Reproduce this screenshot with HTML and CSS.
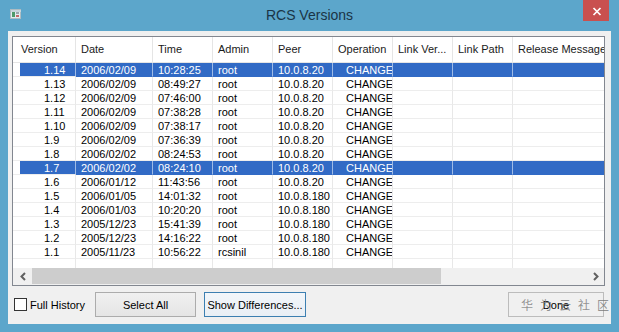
FILE: index.html
```html
<!DOCTYPE html>
<html>
<head>
<meta charset="utf-8">
<title>RCS Versions</title>
<link rel="stylesheet" href="styles.css">
</head>
<body>
<div class="window">
  <div class="titlebar">
    <svg class="app-icon" width="11" height="10" viewBox="0 0 11 10">
      <rect x="0.5" y="0.5" width="10" height="9" fill="#e4ecef" stroke="#aebcc2"/>
      <rect x="1" y="1" width="10" height="2" fill="#c9d6dc"/>
      <rect x="2" y="3" width="3" height="5" fill="#4f9a6a"/>
      <rect x="6" y="3" width="3" height="2" fill="#9aa7ad"/>
      <rect x="6" y="6" width="3" height="2" fill="#c46a6a"/>
    </svg>
    <div class="title">RCS Versions</div>
    <div class="close">
      <svg width="10" height="9" viewBox="0 0 10 9">
        <path d="M1.5 1 L8.5 8 M8.5 1 L1.5 8" stroke="#ffffff" stroke-width="1.7" fill="none"/>
      </svg>
    </div>
  </div>
  <div class="client">
    <div class="list">
      <div class="grid head">
        <span class="h-first">Version</span><span>Date</span><span>Time</span><span>Admin</span><span>Peer</span><span>Operation</span><span>Link Ver...</span><span>Link Path</span><span>Release Message</span>
      </div>
      <div class="rows">
        <div class="grid row sel"><span class="ver">1.14</span><span>2006/02/09</span><span>10:28:25</span><span>root</span><span>10.0.8.20</span><span class="op">CHANGE</span><span></span><span></span><span></span></div>
        <div class="grid row"><span class="ver">1.13</span><span>2006/02/09</span><span>08:49:27</span><span>root</span><span>10.0.8.20</span><span class="op">CHANGE</span><span></span><span></span><span></span></div>
        <div class="grid row"><span class="ver">1.12</span><span>2006/02/09</span><span>07:46:00</span><span>root</span><span>10.0.8.20</span><span class="op">CHANGE</span><span></span><span></span><span></span></div>
        <div class="grid row"><span class="ver">1.11</span><span>2006/02/09</span><span>07:38:28</span><span>root</span><span>10.0.8.20</span><span class="op">CHANGE</span><span></span><span></span><span></span></div>
        <div class="grid row"><span class="ver">1.10</span><span>2006/02/09</span><span>07:38:17</span><span>root</span><span>10.0.8.20</span><span class="op">CHANGE</span><span></span><span></span><span></span></div>
        <div class="grid row"><span class="ver">1.9</span><span>2006/02/09</span><span>07:36:39</span><span>root</span><span>10.0.8.20</span><span class="op">CHANGE</span><span></span><span></span><span></span></div>
        <div class="grid row"><span class="ver">1.8</span><span>2006/02/02</span><span>08:24:53</span><span>root</span><span>10.0.8.20</span><span class="op">CHANGE</span><span></span><span></span><span></span></div>
        <div class="grid row sel"><span class="ver">1.7</span><span>2006/02/02</span><span>08:24:10</span><span>root</span><span>10.0.8.20</span><span class="op">CHANGE</span><span></span><span></span><span></span></div>
        <div class="grid row"><span class="ver">1.6</span><span>2006/01/12</span><span>11:43:56</span><span>root</span><span>10.0.8.20</span><span class="op">CHANGE</span><span></span><span></span><span></span></div>
        <div class="grid row"><span class="ver">1.5</span><span>2006/01/05</span><span>14:01:32</span><span>root</span><span>10.0.8.180</span><span class="op">CHANGE</span><span></span><span></span><span></span></div>
        <div class="grid row"><span class="ver">1.4</span><span>2006/01/03</span><span>10:20:20</span><span>root</span><span>10.0.8.180</span><span class="op">CHANGE</span><span></span><span></span><span></span></div>
        <div class="grid row"><span class="ver">1.3</span><span>2005/12/23</span><span>15:41:39</span><span>root</span><span>10.0.8.180</span><span class="op">CHANGE</span><span></span><span></span><span></span></div>
        <div class="grid row"><span class="ver">1.2</span><span>2005/12/23</span><span>14:16:22</span><span>root</span><span>10.0.8.180</span><span class="op">CHANGE</span><span></span><span></span><span></span></div>
        <div class="grid row"><span class="ver">1.1</span><span>2005/11/23</span><span>10:56:22</span><span>rcsinil</span><span>10.0.8.180</span><span class="op">CHANGE</span><span></span><span></span><span></span></div>
        <div class="grid filler"><span></span><span></span><span></span><span></span><span></span><span></span><span></span><span></span><span></span></div>
      </div>
      <div class="hscroll">
        <div class="sb-btn">
          <svg width="6" height="9" viewBox="0 0 6 9"><polyline points="5,1 1.5,4.5 5,8" fill="none" stroke="#606060" stroke-width="2"/></svg>
        </div>
        <div class="thumb"></div>
        <div class="sb-btn sb-right">
          <svg width="6" height="9" viewBox="0 0 6 9"><polyline points="1,1 4.5,4.5 1,8" fill="none" stroke="#606060" stroke-width="2"/></svg>
        </div>
      </div>
    </div>
    <div class="bottom">
      <label class="check"><span class="box"></span><span>Full History</span></label>
      <div class="btn btn-select">Select All</div>
      <div class="btn btn-diff">Show Differences...</div>
      <div class="btn btn-done">Done<span class="watermark">华为云社区</span></div>
    </div>
  </div>
</div>
</body>
</html>
```

FILE: styles.css
```css
* {
  box-sizing: border-box;
  margin: 0;
  padding: 0;
}

html, body {
  width: 619px;
  height: 332px;
  overflow: hidden;
}

body {
  background: #5ca6cb;
  font-family: "Liberation Sans", Arial, sans-serif;
  font-size: 11px;
  color: #000;
}

.window {
  width: 619px;
  height: 332px;
  display: flex;
  flex-direction: column;
}

.titlebar {
  height: 31px;
  display: grid;
  grid-template-columns: 1fr auto 1fr;
  align-items: start;
}

.app-icon {
  display: block;
  margin: 9px 0 0 10px;
}

.title {
  font-size: 14px;
  line-height: 30px;
  color: #1a3446;
}

.close {
  justify-self: end;
  margin-right: 10px;
  width: 26px;
  height: 21px;
  background: #c9504f;
  display: flex;
  align-items: center;
  justify-content: center;
  padding-top: 2px;
  padding-left: 2px;
}

.client {
  margin: 0 8px;
  height: 293px;
  background: #f0f0f0;
  padding: 5px 6px 7px 4px;
  display: flex;
  flex-direction: column;
}

.list {
  width: 593px;
  height: 250px;
  border: 1px solid #828790;
  background: #fff;
  overflow: hidden;
  display: flex;
  flex-direction: column;
}

.grid {
  display: grid;
  grid-template-columns: 63px 77px 60px 60px 60px 60px 60px 60px 120px;
}

.head {
  height: 26px;
  border-bottom: 1px solid #e5e5e5;
}

.head span {
  line-height: 25px;
  padding-left: 5px;
  border-right: 1px solid #e5e5e5;
  white-space: nowrap;
  overflow: hidden;
  color: #1a1a1a;
}

.head .h-first {
  padding-left: 8px;
}

.rows {
  display: flex;
  flex-direction: column;
}

.row span {
  height: 14px;
  padding: 2px 0 0 5px;
  line-height: 11px;
  border-right: 1px solid #e8e8e8;
  border-bottom: 1px solid #ededed;
  white-space: nowrap;
  overflow: hidden;
}

.row .ver {
  padding-left: 31px;
}

.row .op {
  padding-left: 13px;
}

.row.sel span {
  background: #316ac5;
  color: #fff;
  border-right-color: #9fbbe6;
  border-bottom-color: #316ac5;
}

.row.sel span:first-child {
  background: linear-gradient(90deg, #ffffff 7px, #316ac5 7px);
  border-bottom-color: #ededed;
}

.filler span {
  height: 9px;
  border-right: 1px solid #e8e8e8;
}

.hscroll {
  height: 17px;
  background: #f0f0f0;
  display: flex;
}

.sb-btn {
  width: 17px;
  display: flex;
  align-items: center;
  justify-content: center;
  padding-left: 2px;
}

.sb-right {
  margin-left: auto;
  padding-left: 0;
}

.thumb {
  width: 409px;
  margin: 0 0 1px 2px;
  background: #cdcdcd;
}

.bottom {
  margin-top: 6px;
  height: 25px;
  display: flex;
  align-items: center;
}

.check {
  width: 83px;
  padding-left: 2px;
  display: flex;
  align-items: center;
}

.box {
  width: 13px;
  height: 13px;
  border: 1px solid #333;
  background: #fff;
  margin-right: 3px;
}

.btn {
  height: 25px;
  border: 1px solid #acacac;
  background: linear-gradient(#f0f0f0, #e5e5e5);
  display: flex;
  align-items: center;
  justify-content: center;
}

.btn-select {
  width: 101px;
}

.btn-diff {
  width: 102px;
  margin-left: 8px;
  border-color: #3c7fb1;
  background: linear-gradient(#f2f6fa, #e9eff5);
}

.btn-done {
  width: 96px;
  margin-left: auto;
  margin-right: 1px;
  position: relative;
  border-color: #bcbcbc;
  background: #f0f0f0;
}

.watermark {
  position: absolute;
  left: 12px;
  top: 6px;
  font-family: "Noto Sans CJK SC", sans-serif;
  font-size: 12px;
  line-height: 12px;
  letter-spacing: 7px;
  white-space: nowrap;
  color: rgba(120, 120, 120, 0.8);
}
```
